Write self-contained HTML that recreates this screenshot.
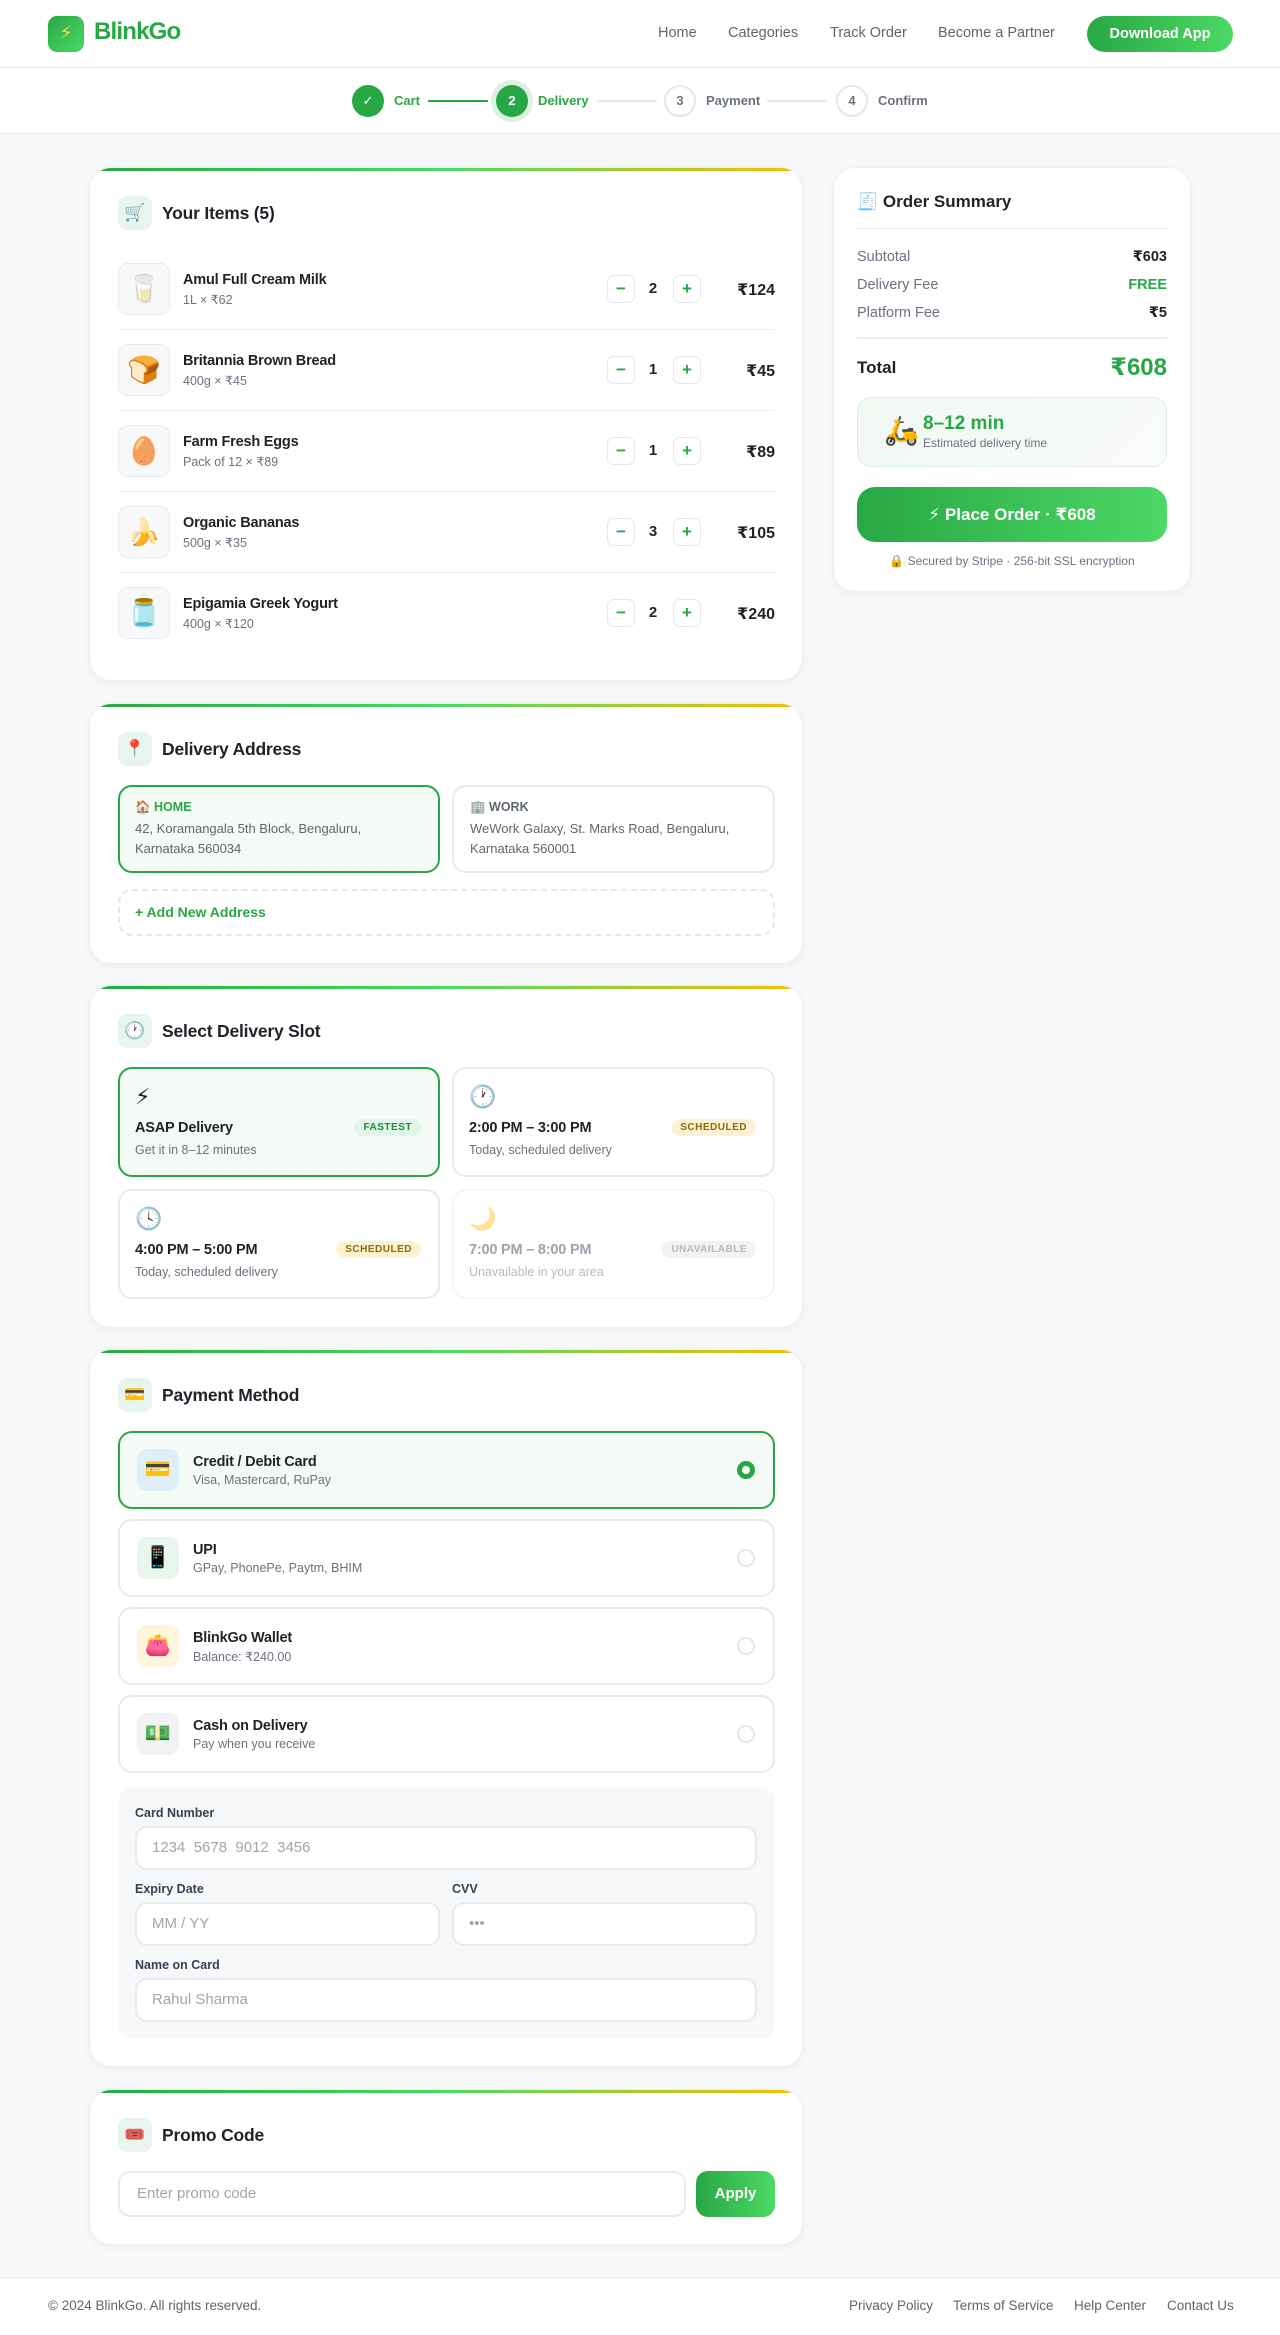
<!DOCTYPE html>
<html><head><meta charset="utf-8"><style>
*{box-sizing:border-box;margin:0;padding:0}
body{width:1280px;height:2335px;background:#f7f8fa;font-family:"Liberation Sans","DejaVu Sans",sans-serif;color:#1f2329;position:relative;overflow:hidden}
.abs{position:absolute}
.hdr{left:0;top:0;width:1280px;height:68px;background:#fff;border-bottom:1px solid #e8eaed}
.logo{left:48px;top:16px;width:36px;height:36px;border-radius:9px;background:linear-gradient(135deg,#28a745,#4cd964);color:#fcd34d;font-size:19px;text-align:center;line-height:36px}
.brand{left:94px;top:18px;font-size:24px;font-weight:bold;color:#28a745;letter-spacing:-.8px}
.nav{top:25px;font-size:14.5px;color:#5f6670}
.dl{left:1087px;top:16px;width:146px;height:36px;border-radius:18px;background:linear-gradient(90deg,#28a745,#4cd964);color:#fff;font-weight:bold;font-size:14.5px;text-align:center;line-height:36px}
.steps{left:0;top:68px;width:1280px;height:66px;background:#fff;border-bottom:1px solid #e8eaed}
.sc{width:32px;height:32px;border-radius:50%;top:85px;text-align:center;line-height:32px;font-size:13px;font-weight:bold}
.done{background:#28a745;color:#fff}
.todo{background:#fff;border:2px solid #e5e7eb;color:#6b7280;line-height:28px}
.sl{top:93px;font-size:13px;font-weight:bold}
.ln{top:100px;height:2px;width:60px}
.card{background:#fff;border-radius:22px;box-shadow:0 2px 8px rgba(0,0,0,.05);border:1px solid #eef0f2;overflow:hidden}
.bar{left:0;top:0;right:0;height:3px;background:linear-gradient(90deg,#28a745,#4cd964 50%,#f5c000)}
.ci{width:34px;height:34px;border-radius:9px;background:#e8f5ec;text-align:center;line-height:34px;font-size:17px}
.ct{font-size:17.5px;font-weight:bold;color:#1f2329;letter-spacing:-.2px}
.img{width:52px;height:52px;border:1px solid #e8eaed;border-radius:10px;background:#f7f8fa;text-align:center;line-height:50px;font-size:27px}
.nm{font-size:14.5px;font-weight:bold;letter-spacing:-.2px}
.sb{font-size:12.5px;color:#6b7280}
.qb{width:28px;height:28px;border:1.5px solid #e5e7eb;border-radius:7px;text-align:center;line-height:25px;color:#28a745;font-weight:bold;font-size:17px;background:#fff}
.qn{width:18px;text-align:center;font-weight:bold;font-size:15px}
.pr{font-size:16px;font-weight:bold;text-align:right;width:100px}
.sep{height:1px;background:#eceef0}
.box{border:2px solid #e8eaed;border-radius:14px;background:#fff}
.sel{border-color:#28a745;background:#f4faf5}
.bd{font-size:10px;font-weight:bold;padding:3px 9px;border-radius:10px;letter-spacing:.5px}
.pi{width:42px;height:42px;border-radius:10px;text-align:center;line-height:42px;font-size:21px}
.rd{width:18px;height:18px;border-radius:50%;border:2px solid #e5e7eb}
.lb{font-size:12.5px;font-weight:bold;color:#374151}
.in{background:#fff;border:2px solid #e8eaed;border-radius:12px;height:44px;font-size:15px;color:#a0a6ad;padding-left:15px;line-height:40px}
.row{font-size:14.5px;color:#6b7280}
.rv{font-size:14.5px;font-weight:bold;text-align:right}
.ft{font-size:13.5px;color:#5f6670;top:2298px}
</style></head><body>
<div class="abs hdr"></div>
<div class="abs logo">⚡</div>
<div class="abs brand">BlinkGo</div>
<div class="abs nav" style="left:658px">Home</div>
<div class="abs nav" style="left:728px">Categories</div>
<div class="abs nav" style="left:830px">Track Order</div>
<div class="abs nav" style="left:938px">Become a Partner</div>
<div class="abs dl">Download App</div>

<div class="abs steps"></div>
<div class="abs sc done" style="left:352px">✓</div>
<div class="abs sl" style="left:394px;color:#28a745">Cart</div>
<div class="abs ln" style="left:428px;background:#28a745"></div>
<div class="abs" style="left:491px;top:80px;width:42px;height:42px;border-radius:50%;background:#dcf1e2"></div>
<div class="abs sc done" style="left:496px">2</div>
<div class="abs sl" style="left:538px;color:#28a745">Delivery</div>
<div class="abs ln" style="left:597px;background:#e5e7eb"></div>
<div class="abs sc todo" style="left:664px">3</div>
<div class="abs sl" style="left:706px;color:#6b7280">Payment</div>
<div class="abs ln" style="left:767px;background:#e5e7eb"></div>
<div class="abs sc todo" style="left:836px">4</div>
<div class="abs sl" style="left:878px;color:#6b7280">Confirm</div>

<!-- Card 1 -->
<div class="abs card" style="left:89px;top:167px;width:714px;height:514px">
<div class="abs bar"></div>
<div class="abs ci" style="left:28px;top:28px">🛒</div>
<div class="abs ct" style="left:72px;top:35px">Your Items (5)</div>
</div>
<div class="abs img" style="left:118px;top:263px">🥛</div>
<div class="abs nm" style="left:183px;top:272px">Amul Full Cream Milk</div>
<div class="abs sb" style="left:183px;top:292px">1L × ₹62</div>
<div class="abs qb" style="left:607px;top:275px">−</div><div class="abs qn" style="left:644px;top:280px">2</div><div class="abs qb" style="left:673px;top:275px">+</div>
<div class="abs pr" style="left:675px;top:280px">₹124</div>
<div class="abs sep" style="left:118px;top:329px;width:657px"></div>

<div class="abs img" style="left:118px;top:344px">🍞</div>
<div class="abs nm" style="left:183px;top:353px">Britannia Brown Bread</div>
<div class="abs sb" style="left:183px;top:373px">400g × ₹45</div>
<div class="abs qb" style="left:607px;top:356px">−</div><div class="abs qn" style="left:644px;top:361px">1</div><div class="abs qb" style="left:673px;top:356px">+</div>
<div class="abs pr" style="left:675px;top:361px">₹45</div>
<div class="abs sep" style="left:118px;top:410px;width:657px"></div>

<div class="abs img" style="left:118px;top:425px">🥚</div>
<div class="abs nm" style="left:183px;top:434px">Farm Fresh Eggs</div>
<div class="abs sb" style="left:183px;top:454px">Pack of 12 × ₹89</div>
<div class="abs qb" style="left:607px;top:437px">−</div><div class="abs qn" style="left:644px;top:442px">1</div><div class="abs qb" style="left:673px;top:437px">+</div>
<div class="abs pr" style="left:675px;top:442px">₹89</div>
<div class="abs sep" style="left:118px;top:491px;width:657px"></div>

<div class="abs img" style="left:118px;top:506px">🍌</div>
<div class="abs nm" style="left:183px;top:515px">Organic Bananas</div>
<div class="abs sb" style="left:183px;top:535px">500g × ₹35</div>
<div class="abs qb" style="left:607px;top:518px">−</div><div class="abs qn" style="left:644px;top:523px">3</div><div class="abs qb" style="left:673px;top:518px">+</div>
<div class="abs pr" style="left:675px;top:523px">₹105</div>
<div class="abs sep" style="left:118px;top:572px;width:657px"></div>

<div class="abs img" style="left:118px;top:587px">🫙</div>
<div class="abs nm" style="left:183px;top:596px">Epigamia Greek Yogurt</div>
<div class="abs sb" style="left:183px;top:616px">400g × ₹120</div>
<div class="abs qb" style="left:607px;top:599px">−</div><div class="abs qn" style="left:644px;top:604px">2</div><div class="abs qb" style="left:673px;top:599px">+</div>
<div class="abs pr" style="left:675px;top:604px">₹240</div>

<!-- Card 2 -->
<div class="abs card" style="left:89px;top:703px;width:714px;height:261px">
<div class="abs bar"></div>
<div class="abs ci" style="left:28px;top:28px">📍</div>
<div class="abs ct" style="left:72px;top:35px">Delivery Address</div>
</div>
<div class="abs box sel" style="left:118px;top:785px;width:322px;height:88px"></div>
<div class="abs" style="left:135px;top:800px;font-size:12.5px;font-weight:bold;color:#28a745">🏠 HOME</div>
<div class="abs" style="left:135px;top:819px;font-size:13px;color:#5f6670;line-height:20px;width:240px">42, Koramangala 5th Block, Bengaluru, Karnataka 560034</div>
<div class="abs box" style="left:452px;top:785px;width:323px;height:88px"></div>
<div class="abs" style="left:470px;top:800px;font-size:12.5px;font-weight:bold;color:#5f6670">🏢 WORK</div>
<div class="abs" style="left:470px;top:819px;font-size:13px;color:#5f6670;line-height:20px;width:280px">WeWork Galaxy, St. Marks Road, Bengaluru, Karnataka 560001</div>
<div class="abs" style="left:118px;top:889px;width:657px;height:47px;border:2px dashed #e5e7eb;border-radius:14px"></div>
<div class="abs" style="left:135px;top:904px;font-size:14px;font-weight:bold;color:#28a745">+ Add New Address</div>

<!-- Card 3 -->
<div class="abs card" style="left:89px;top:985px;width:714px;height:343px">
<div class="abs bar"></div>
<div class="abs ci" style="left:28px;top:28px">🕐</div>
<div class="abs ct" style="left:72px;top:35px">Select Delivery Slot</div>
</div>
<div class="abs box sel" style="left:118px;top:1067px;width:322px;height:110px"></div>
<div class="abs" style="left:135px;top:1084px;font-size:22px">⚡</div>
<div class="abs nm" style="left:135px;top:1120px;font-size:14.5px">ASAP Delivery</div>
<div class="abs bd" style="right:859px;top:1119px;background:#e3f4e8;color:#1e8a3c">FASTEST</div>
<div class="abs sb" style="left:135px;top:1143px">Get it in 8–12 minutes</div>

<div class="abs box" style="left:452px;top:1067px;width:323px;height:110px"></div>
<div class="abs" style="left:469px;top:1084px;font-size:22px">🕐</div>
<div class="abs nm" style="left:469px;top:1120px;font-size:14.5px">2:00 PM – 3:00 PM</div>
<div class="abs bd" style="right:524px;top:1119px;background:#fdf3d4;color:#8a6d00">SCHEDULED</div>
<div class="abs sb" style="left:469px;top:1143px">Today, scheduled delivery</div>

<div class="abs box" style="left:118px;top:1189px;width:322px;height:110px"></div>
<div class="abs" style="left:135px;top:1206px;font-size:22px">🕓</div>
<div class="abs nm" style="left:135px;top:1242px;font-size:14.5px">4:00 PM – 5:00 PM</div>
<div class="abs bd" style="right:859px;top:1241px;background:#fdf3d4;color:#8a6d00">SCHEDULED</div>
<div class="abs sb" style="left:135px;top:1265px">Today, scheduled delivery</div>

<div class="abs box" style="left:452px;top:1189px;width:323px;height:110px;opacity:.5"></div>
<div class="abs" style="left:469px;top:1206px;font-size:22px;opacity:.5">🌙</div>
<div class="abs nm" style="left:469px;top:1242px;font-size:14.5px;color:#9ca3af">7:00 PM – 8:00 PM</div>
<div class="abs bd" style="right:524px;top:1241px;background:#f1f2f4;color:#b5bac0">UNAVAILABLE</div>
<div class="abs sb" style="left:469px;top:1265px;color:#b5bac0">Unavailable in your area</div>

<!-- Card 4 -->
<div class="abs card" style="left:89px;top:1349px;width:714px;height:718px">
<div class="abs bar"></div>
<div class="abs ci" style="left:28px;top:28px">💳</div>
<div class="abs ct" style="left:72px;top:35px">Payment Method</div>
</div>
<div class="abs box sel" style="left:118px;top:1431px;width:657px;height:78px"></div>
<div class="abs pi" style="left:137px;top:1449px;background:#e0eef9">💳</div>
<div class="abs nm" style="left:193px;top:1454px;font-size:14.5px">Credit / Debit Card</div>
<div class="abs sb" style="left:193px;top:1473px">Visa, Mastercard, RuPay</div>
<div class="abs rd" style="left:737px;top:1461px;border:5px solid #28a745;background:#fff"></div>

<div class="abs box" style="left:118px;top:1519px;width:657px;height:78px"></div>
<div class="abs pi" style="left:137px;top:1537px;background:#e8f5ec">📱</div>
<div class="abs nm" style="left:193px;top:1542px;font-size:14.5px">UPI</div>
<div class="abs sb" style="left:193px;top:1561px">GPay, PhonePe, Paytm, BHIM</div>
<div class="abs rd" style="left:737px;top:1549px"></div>

<div class="abs box" style="left:118px;top:1607px;width:657px;height:78px"></div>
<div class="abs pi" style="left:137px;top:1625px;background:#fdf6dc">👛</div>
<div class="abs nm" style="left:193px;top:1630px;font-size:14.5px">BlinkGo Wallet</div>
<div class="abs sb" style="left:193px;top:1649px">Balance: ₹240.00</div>
<div class="abs rd" style="left:737px;top:1637px"></div>

<div class="abs box" style="left:118px;top:1695px;width:657px;height:78px"></div>
<div class="abs pi" style="left:137px;top:1713px;background:#f1f2f4">💵</div>
<div class="abs nm" style="left:193px;top:1718px;font-size:14.5px">Cash on Delivery</div>
<div class="abs sb" style="left:193px;top:1737px">Pay when you receive</div>
<div class="abs rd" style="left:737px;top:1725px"></div>

<div class="abs" style="left:118px;top:1788px;width:657px;height:250px;background:#f7f8fa;border-radius:14px"></div>
<div class="abs lb" style="left:135px;top:1806px">Card Number</div>
<div class="abs in" style="left:135px;top:1826px;width:622px">1234&nbsp; 5678&nbsp; 9012&nbsp; 3456</div>
<div class="abs lb" style="left:135px;top:1882px">Expiry Date</div>
<div class="abs in" style="left:135px;top:1902px;width:305px">MM / YY</div>
<div class="abs lb" style="left:452px;top:1882px">CVV</div>
<div class="abs in" style="left:452px;top:1902px;width:305px">•••</div>
<div class="abs lb" style="left:135px;top:1958px">Name on Card</div>
<div class="abs in" style="left:135px;top:1978px;width:622px">Rahul Sharma</div>

<!-- Card 5 -->
<div class="abs card" style="left:89px;top:2089px;width:714px;height:156px">
<div class="abs bar"></div>
<div class="abs ci" style="left:28px;top:28px">🎟️</div>
<div class="abs ct" style="left:72px;top:35px">Promo Code</div>
</div>
<div class="abs in" style="left:118px;top:2171px;width:568px;height:46px;line-height:42px;padding-left:17px">Enter promo code</div>
<div class="abs" style="left:696px;top:2171px;width:79px;height:46px;border-radius:12px;background:linear-gradient(90deg,#28a745,#4cd964);color:#fff;font-weight:bold;font-size:15px;text-align:center;line-height:46px">Apply</div>

<!-- Sidebar -->
<div class="abs card" style="left:833px;top:167px;width:358px;height:425px"></div>
<div class="abs" style="left:857px;top:192px;font-size:17px;font-weight:bold">🧾 Order Summary</div>
<div class="abs sep" style="left:857px;top:228px;width:310px"></div>
<div class="abs row" style="left:857px;top:249px">Subtotal</div><div class="abs rv" style="left:1067px;top:249px;width:100px">₹603</div>
<div class="abs row" style="left:857px;top:277px">Delivery Fee</div><div class="abs rv" style="left:1067px;top:277px;width:100px;color:#28a745">FREE</div>
<div class="abs row" style="left:857px;top:305px">Platform Fee</div><div class="abs rv" style="left:1067px;top:305px;width:100px">₹5</div>
<div class="abs" style="left:857px;top:337px;width:310px;height:2px;background:#eceef0"></div>
<div class="abs" style="left:857px;top:358px;font-size:17px;font-weight:bold">Total</div>
<div class="abs" style="left:1017px;top:353px;width:150px;text-align:right;font-size:24px;font-weight:bold;color:#28a745">₹608</div>
<div class="abs" style="left:857px;top:397px;width:310px;height:70px;border:1.5px solid #dcefe2;border-radius:14px;background:linear-gradient(135deg,#f0f8f2,#f9fbfa)"></div>
<div class="abs" style="left:884px;top:414px;font-size:28px">🛵</div>
<div class="abs" style="left:923px;top:413px;font-size:19px;font-weight:bold;color:#28a745">8–12 min</div>
<div class="abs" style="left:923px;top:436px;font-size:12px;color:#6b7280">Estimated delivery time</div>
<div class="abs" style="left:857px;top:487px;width:310px;height:55px;border-radius:18px;background:linear-gradient(90deg,#28a745,#4cd964);color:#fff;font-weight:bold;font-size:17px;text-align:center;line-height:55px">⚡ Place Order · ₹608</div>
<div class="abs" style="left:857px;top:554px;width:310px;text-align:center;font-size:12px;color:#6b7280">🔒 Secured by Stripe · 256-bit SSL encryption</div>

<!-- Footer -->
<div class="abs" style="left:0;top:2277px;width:1280px;height:58px;background:#fff;border-top:1px solid #e8eaed"></div>
<div class="abs ft" style="left:48px">© 2024 BlinkGo. All rights reserved.</div>
<div class="abs ft" style="left:849px">Privacy Policy</div>
<div class="abs ft" style="left:953px">Terms of Service</div>
<div class="abs ft" style="left:1074px">Help Center</div>
<div class="abs ft" style="left:1167px">Contact Us</div>
</body></html>
